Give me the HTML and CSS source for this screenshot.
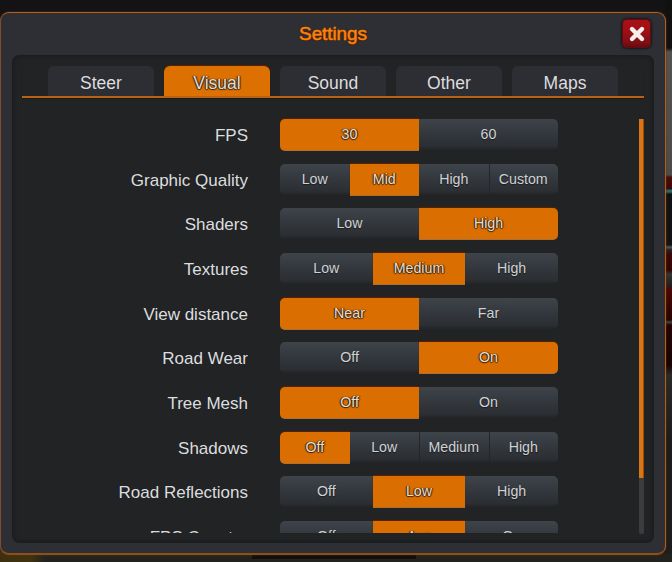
FILE: index.html
```html
<!DOCTYPE html>
<html lang="en">
<head>
<meta charset="utf-8">
<title>Settings</title>
<link rel="stylesheet" href="styles.css">
</head>
<body>
<div class="scene"></div>
<main class="dialog">
  <header class="header">
    <h1 class="title">Settings</h1>
    <button class="close" aria-label="Close"><svg width="18" height="18" viewBox="0 0 18 18"><path d="M4 4L14 14M14 4L4 14"/></svg></button>
  </header>
  <section class="body">
    <nav class="tabs">
      <div class="tab">Steer</div>
      <div class="tab active">Visual</div>
      <div class="tab">Sound</div>
      <div class="tab">Other</div>
      <div class="tab">Maps</div>
    </nav>
    <div class="content">
      <div class="rows">
        <div class="row"><span class="label">FPS</span><div class="seg"><span class="on">30</span><span>60</span></div></div>
        <div class="row"><span class="label">Graphic Quality</span><div class="seg"><span>Low</span><span class="on">Mid</span><span>High</span><span>Custom</span></div></div>
        <div class="row"><span class="label">Shaders</span><div class="seg"><span>Low</span><span class="on">High</span></div></div>
        <div class="row"><span class="label">Textures</span><div class="seg"><span>Low</span><span class="on">Medium</span><span>High</span></div></div>
        <div class="row"><span class="label">View distance</span><div class="seg"><span class="on">Near</span><span>Far</span></div></div>
        <div class="row"><span class="label">Road Wear</span><div class="seg"><span>Off</span><span class="on">On</span></div></div>
        <div class="row"><span class="label">Tree Mesh</span><div class="seg"><span class="on">Off</span><span>On</span></div></div>
        <div class="row"><span class="label">Shadows</span><div class="seg"><span class="on">Off</span><span>Low</span><span>Medium</span><span>High</span></div></div>
        <div class="row"><span class="label">Road Reflections</span><div class="seg"><span>Off</span><span class="on">Low</span><span>High</span></div></div>
        <div class="row"><span class="label">FPS Counter</span><div class="seg"><span>Off</span><span class="on">Avg</span><span>On</span></div></div>
      </div>
      <div class="scrollbar"><div class="thumb"></div></div>
    </div>
  </section>
</main>
</body>
</html>
```
FILE: styles.css
```css
* { box-sizing: border-box; }
body {
  margin: 0;
  width: 672px;
  height: 562px;
  padding: 12px 6px 7px 0;
  overflow: hidden;
  background: linear-gradient(#131315 0, #151515 50px, #161616 500px, #20211f 562px);
  font-family: "Liberation Sans", Arial, sans-serif;
  color: #dcdddf;
}
/* game view glimpsed around the dialog */
.scene {
  position: absolute;
  inset: 0;
  background:
    linear-gradient(90deg, #3c3010, #403310 30px, transparent 45px) 0 100% / 50px 14px no-repeat,
    linear-gradient(#0c0c0c, #10100f) 252px 555px / 164px 4px no-repeat,
    linear-gradient(#22231f, #22231f) 0 100% / 672px 8px no-repeat,
    linear-gradient(#111 0, #111 48px, #555350 52px, #4c4b49 175px, #4a0d0b 177px, #3c0908 189px, #28686a 190px, #28686a 192px, #101112 194px, #121314 245px, #555 247px, #222 250px, #3a0806 254px, #320504 270px, #333 274px, #222 284px, #4a0705 290px, #260504 320px, #444 322px, #250403 325px, #170504 365px, #292a28 375px, #1c1c1b 440px, #1d1d1b 562px) 100% 0 / 7px 562px no-repeat;
}
.dialog {
  position: relative;
  height: 543px;
  padding: 0 11px 10px 11px;
  border: 1px solid #b0601c;
  border-left-color: #80502c;
  border-bottom: 2px solid #8b501c;
  border-radius: 9px;
  background: #2d2f34;
  box-shadow: 0 0 2px #7a2e00;
}
.header {
  height: 42px;
  display: grid;
  grid-template-columns: 34px 1fr 34px;
  align-items: center;
}
.title {
  grid-column: 2;
  margin: 0;
  text-align: center;
  font-size: 19px;
  line-height: 24px;
  font-weight: 400;
  color: #fa820f;
  -webkit-text-stroke: .5px #fa820f;
  text-shadow: 0 1px 1px #522400, 1px 0 1px #522400, -1px 0 1px #522400;
  letter-spacing: -.1px;
}
.close {
  width: 29px;
  height: 29px;
  margin: 0 0 1px 2px;
  padding: 0;
  display: grid;
  place-items: center;
  border: 1px solid #650b0f;
  border-radius: 5px;
  background: linear-gradient(#aa1016, #a01015 35%, #7f0e13 85%, #620c10);
  box-shadow: 0 0 2px 1px #17191c;
}
.close path { fill: none; stroke: #f7eeee; stroke-width: 4.4; stroke-linecap: round; }
.body {
  height: 488px;
  padding: 10px 9px 9px;
  border: 1px solid #1b1d1f;
  border-radius: 7px;
  background: #212325;
  box-shadow: inset 0 0 4px #181a1c;
}
.tabs {
  height: 32px;
  padding: 0 26px;
  display: flex;
  gap: 10px;
  border-bottom: 2px solid #b96214;
  box-shadow: 0 1px 1px #191a1b;
}
.tab {
  flex: 1;
  display: grid;
  place-items: center;
  padding-top: 4px;
  border-radius: 6px 6px 0 0;
  background: #2c2e33;
  font-size: 17.5px;
  line-height: 24px;
}
.tab.active {
  background: #dc7000;
  box-shadow: 0 -1px 1px #5b2100;
  text-shadow: 0 1px 1px #3a260e, 1px 0 1px #3a260e, -1px 0 1px #3a260e;
}
.content {
  height: 438px;
  padding-top: 19px;
  display: flex;
  justify-content: space-between;
}
.rows {
  height: 416px;
  width: 540px;
  overflow: hidden;
  padding-top: 2px;
}
.row {
  height: 44.67px;
  display: flex;
  align-items: flex-start;
}
.label {
  width: 226px;
  text-align: right;
  font-size: 17px;
  line-height: 30px;
  padding-top: 2px;
}
.seg {
  width: 278px;
  height: 31px;
  margin-left: 32px;
  display: flex;
  border-radius: 5px;
}
.seg span {
  flex: 1;
  min-width: 0;
  height: 31px;
  text-align: center;
  font-size: 14.2px;
  line-height: 31.6px;
  background: linear-gradient(#3e4449 0, #363b41 35%, #2b2e32 88%, #222427 100%);
  text-shadow: 0 1px 1px #1a1c1f;
  color: #d0d1d3;
}
.seg span:first-child { border-radius: 5px 0 0 5px; }
.seg span:last-child { border-radius: 0 5px 5px 0; }
.seg span:not(.on) + span:not(.on) { box-shadow: inset 1px 0 #24272a; }
.seg .on {
  height: 32px;
  background: #da6e00;
  border-bottom: 1px solid #ac7034;
  box-shadow: 0 -1px 1px #5b2100;
  color: #e4ddd2;
  text-shadow: 0 1px 1px #38230c, 1px 0 1px #38230c, -1px 0 1px #38230c;
}
.scrollbar {
  width: 5px;
  height: 415px;
  margin-top: 2px;
  border-radius: 2px;
  background: #3a3c3e;
}
.thumb {
  height: 359px;
  background: #d87514;
  border-right: 1px solid #9a4c08;
}
```
